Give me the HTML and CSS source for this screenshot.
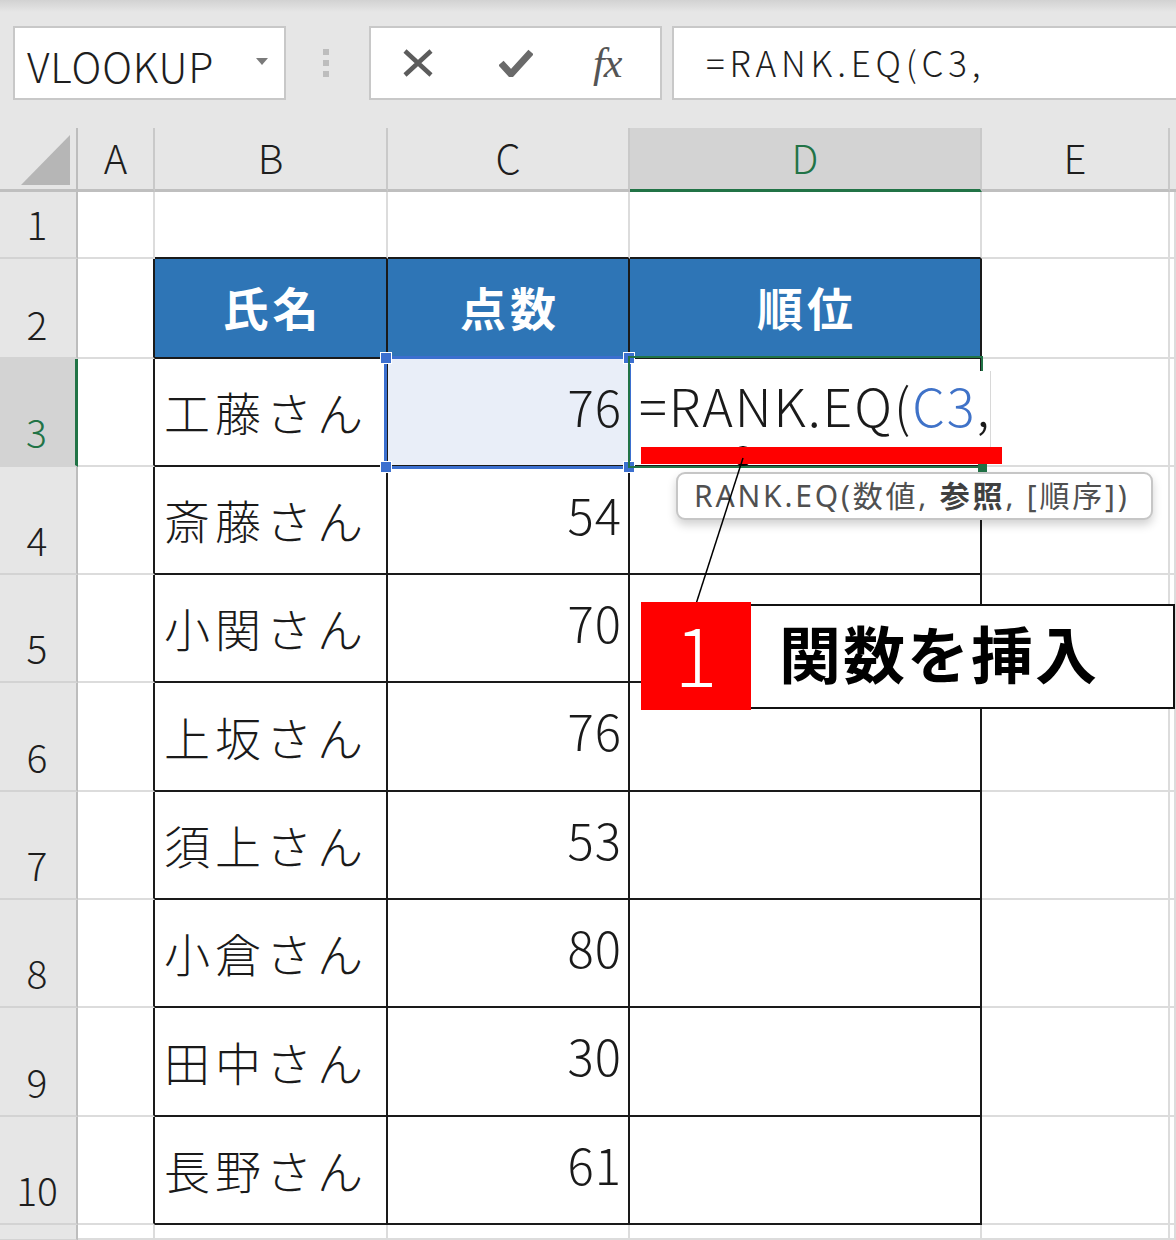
FILE: index.html
```html
<!DOCTYPE html>
<html lang="ja">
<head>
<meta charset="utf-8">
<title>RANK.EQ</title>
<link rel="stylesheet" href="styles.css">
</head>
<body>
<div class="toolbar">
  <div class="namebox"><span class="nb-text">VLOOKUP</span><span class="nb-arrow"></span></div>
  <div class="dots"><i></i><i></i><i></i></div>
  <div class="btnbox">
    <svg class="ic-x" width="30" height="28" viewBox="0 0 30 28"><path d="M2 2 L28 26 M28 2 L2 26" stroke="#5c5c5c" stroke-width="4.5" fill="none"/></svg>
    <svg class="ic-check" width="34" height="28" viewBox="0 0 34 28"><path d="M2 14 L12 25 L32 3" stroke="#6a6a6a" stroke-width="7" fill="none" stroke-linejoin="miter"/></svg>
    <span class="ic-fx">fx</span>
  </div>
  <div class="formula"><span class="f-text">=RANK.EQ(C3,</span></div>
</div>

<div class="sheet">
  <div class="ch corner"><svg width="76" height="62" viewBox="0 0 76 62"><polygon points="21,57 70,7 70,57" fill="#b6b6b6"/></svg></div>
  <div class="ch">A</div><div class="ch">B</div><div class="ch">C</div><div class="ch sel">D</div><div class="ch">E</div><div class="ch last"></div>

  <div class="rh">1</div><div class="c"></div><div class="c tb"></div><div class="c tb"></div><div class="c tb"></div><div class="c"></div><div class="c"></div>

  <div class="rh">2</div><div class="c tl"></div><div class="c t hd">氏名</div><div class="c t hd">点数</div><div class="c t hd">順位</div><div class="c"></div><div class="c"></div>

  <div class="rh sel">3</div><div class="c tl"></div><div class="c t nm">工藤さん</div><div class="c t num selc">76</div><div class="c t"></div><div class="c"></div><div class="c"></div>
  <div class="rh">4</div><div class="c tl"></div><div class="c t nm">斎藤さん</div><div class="c t num">54</div><div class="c t"></div><div class="c"></div><div class="c"></div>
  <div class="rh">5</div><div class="c tl"></div><div class="c t nm">小関さん</div><div class="c t num">70</div><div class="c t"></div><div class="c"></div><div class="c"></div>
  <div class="rh">6</div><div class="c tl"></div><div class="c t nm">上坂さん</div><div class="c t num">76</div><div class="c t"></div><div class="c"></div><div class="c"></div>
  <div class="rh">7</div><div class="c tl"></div><div class="c t nm">須上さん</div><div class="c t num">53</div><div class="c t"></div><div class="c"></div><div class="c"></div>
  <div class="rh">8</div><div class="c tl"></div><div class="c t nm">小倉さん</div><div class="c t num">80</div><div class="c t"></div><div class="c"></div><div class="c"></div>
  <div class="rh">9</div><div class="c tl"></div><div class="c t nm">田中さん</div><div class="c t num">30</div><div class="c t"></div><div class="c"></div><div class="c"></div>
  <div class="rh">10</div><div class="c tl"></div><div class="c t nm">長野さん</div><div class="c t num">61</div><div class="c t"></div><div class="c"></div><div class="c"></div>
  <div class="rh"></div><div class="c"></div><div class="c"></div><div class="c"></div><div class="c"></div><div class="c"></div><div class="c"></div>
</div>

<div class="selbox"><i class="h h1"></i><i class="h h2"></i><i class="h h3"></i><i class="h h4"></i></div>
<div class="active"><i class="fill"></i></div>
<div class="editor">=RANK.EQ(<span class="ref">C3</span>,</div>
<div class="tip">RANK.EQ(数値, <b>参照</b>, [順序])</div>
<svg class="anno" width="1176" height="1240" viewBox="0 0 1176 1240">
  <circle cx="743" cy="456" r="10" fill="#000"/>
  <rect x="641" y="447" width="361" height="17" fill="#ff0000"/>
  <line x1="743" y1="458" x2="696" y2="604" stroke="#000" stroke-width="1.5"/>
</svg>
<div class="callout"><div class="num-badge">1</div><div class="label">関数を挿入</div></div>
</body>
</html>
```

FILE: styles.css
```css
html, body {
  margin: 0;
  padding: 0;
}
body {
  width: 1176px;
  height: 1240px;
  overflow: hidden;
  position: relative;
  background: #e6e6e6;
  font-family: "Noto Sans CJK JP", "Noto Sans", sans-serif;
  font-weight: 300;
  color: #1e1e1e;
}

/* ---------- toolbar ---------- */
.toolbar {
  height: 128px;
  box-sizing: border-box;
  padding: 26px 0 28px 13px;
  display: flex;
  align-items: stretch;
  background: linear-gradient(#d2d2d2 0, #e6e6e6 12px);
}
.namebox {
  width: 273px;
  box-sizing: border-box;
  background: #fff;
  border: 2px solid #c8c8c8;
  display: flex;
  align-items: center;
  justify-content: space-between;
  padding: 4px 16px 0 12px;
}
.nb-text {
  font-size: 41px;
  letter-spacing: 0.8px;
  line-height: 1;
  color: #1e1e1e;
}
.nb-arrow {
  width: 0;
  height: 0;
  border-left: 6px solid transparent;
  border-right: 6px solid transparent;
  border-top: 7px solid #7a7a7a;
  margin-top: -8px;
}
.dots {
  margin-left: 37px;
  width: 6px;
  display: flex;
  flex-direction: column;
  justify-content: center;
  gap: 5px;
}
.dots i {
  display: block;
  width: 6px;
  height: 6px;
  background: #bdbdbd;
}
.btnbox {
  margin-left: 40px;
  width: 293px;
  box-sizing: border-box;
  background: #fff;
  border: 2px solid #c8c8c8;
  display: flex;
  align-items: center;
  padding-left: 32px;
}
.ic-check {
  margin-left: 66px;
}
.ic-fx {
  margin-left: 60px;
  font-family: "Liberation Serif", serif;
  font-style: italic;
  font-weight: 400;
  font-size: 42px;
  line-height: 1;
  color: #555;
  letter-spacing: -1px;
}
.formula {
  margin-left: 10px;
  flex: 1;
  background: #fff;
  border: 2px solid #c8c8c8;
  border-right: none;
  display: flex;
  align-items: center;
  padding: 0 0 4px 32px;
}
.f-text {
  font-size: 35px;
  line-height: 1;
  letter-spacing: 4.8px;
  color: #1e1e1e;
}

/* ---------- sheet grid ---------- */
.sheet {
  display: grid;
  grid-template-columns: 78px 77px 233px 242px 352px 188px 1fr;
  grid-template-rows: 64px 67px 100px 108px 108px 108px 109px 108px 108px 109px 108px 15px;
}
.sheet > div {
  box-sizing: border-box;
  min-width: 0;
  overflow: hidden;
}
.ch {
  background: #e6e6e6;
  border-right: 2px solid #c9c9c9;
  border-bottom: 3px solid #bfbfbf;
  display: flex;
  align-items: center;
  justify-content: center;
  font-size: 40px;
  line-height: 1;
  padding-bottom: 4px;
  color: #1e1e1e;
}
.ch.corner {
  border-right: 2px solid #bdbdbd;
  padding: 0;
  align-items: flex-start;
  justify-content: flex-start;
}
.ch.sel {
  background: #d3d3d3;
  color: #217346;
  border-bottom: 3px solid #217346;
}
.ch.last {
  border-right: none;
}
.rh {
  background: #e6e6e6;
  border-right: 2px solid #bdbdbd;
  border-bottom: 2px solid #d3d3d3;
  display: flex;
  align-items: flex-end;
  justify-content: center;
  font-size: 39px;
  line-height: 1;
  padding-bottom: 14px;
  padding-right: 2px;
  color: #1e1e1e;
}
.rh.sel {
  background: #d3d3d3;
  color: #217346;
  border-right: 3px solid #217346;
}
.c {
  background: #fff;
  border-right: 2px solid #dcdcdc;
  border-bottom: 2px solid #dcdcdc;
  display: flex;
  align-items: center;
}
.c.tb {
  border-bottom: 2px solid #1a1a1a;
}
.c.tl {
  border-right: 2px solid #1a1a1a;
}
.c.t {
  border-right: 2px solid #1a1a1a;
  border-bottom: 2px solid #1a1a1a;
}
.c.hd {
  background: #2e75b6;
  color: #fff;
  font-weight: 700;
  font-size: 46px;
  letter-spacing: 4px;
  line-height: 1;
  justify-content: center;
  padding-left: 4px;
  padding-bottom: 4px;
}
.c.nm {
  font-size: 46px;
  letter-spacing: 5px;
  line-height: 1;
  padding-left: 9px;
  padding-bottom: 2px;
  white-space: nowrap;
  color: #1a1a1a;
}
.c.num {
  justify-content: flex-end;
  font-size: 49px;
  letter-spacing: 1px;
  line-height: 1;
  padding-right: 6px;
  padding-bottom: 14px;
  color: #1a1a1a;
}
.c.selc {
  background: #e9eef8;
}

/* ---------- overlays ---------- */
.selbox {
  position: absolute;
  left: 384px;
  top: 356px;
  width: 247px;
  height: 113px;
  box-sizing: border-box;
  border: 3px solid #3b6fcf;
}
.selbox .h {
  position: absolute;
  width: 10px;
  height: 10px;
  background: #3b6fcf;
  outline: 1.5px solid #fff;
}
.h1 { left: -6px; top: -6px; }
.h2 { right: -6px; top: -6px; }
.h3 { left: -6px; bottom: -6px; }
.h4 { right: -6px; bottom: -6px; }

.active {
  position: absolute;
  left: 628px;
  top: 356px;
  width: 355px;
  height: 112px;
  box-sizing: border-box;
  border: 2px solid #217346;
}
.active .fill {
  position: absolute;
  right: -6px;
  bottom: -6px;
  width: 9px;
  height: 9px;
  background: #217346;
}
.editor {
  position: absolute;
  left: 632px;
  top: 371px;
  width: 359px;
  height: 89px;
  box-sizing: border-box;
  background: #fff;
  border-right: 1px solid #d8d8d8;
  padding: 8px 0 0 7px;
  font-size: 52px;
  letter-spacing: 1.9px;
  line-height: 1;
  white-space: nowrap;
  color: #1a1a1a;
}
.editor .ref {
  color: #3f72c8;
}
.tip {
  position: absolute;
  left: 676px;
  top: 472px;
  width: 477px;
  height: 48px;
  box-sizing: border-box;
  background: #fff;
  border: 2px solid #c6c6c6;
  border-radius: 9px;
  box-shadow: 0 5px 10px rgba(0, 0, 0, 0.18);
  padding: 4px 0 0 16px;
  font-family: "Noto Sans", "Noto Sans CJK JP", sans-serif;
  font-weight: 400;
  font-size: 30px;
  line-height: 36px;
  letter-spacing: 2.8px;
  white-space: nowrap;
  color: #505050;
}
.tip b {
  font-weight: 700;
  color: #404040;
}
.anno {
  position: absolute;
  left: 0;
  top: 0;
  pointer-events: none;
}
.callout {
  position: absolute;
  left: 641px;
  top: 602px;
  display: flex;
  align-items: center;
}
.num-badge {
  width: 110px;
  height: 108px;
  background: #ff0000;
  color: #fff;
  font-weight: 300;
  font-size: 80px;
  line-height: 1;
  display: flex;
  align-items: center;
  justify-content: center;
  padding-bottom: 8px;
  box-sizing: border-box;
}
.label {
  width: 424px;
  height: 105px;
  box-sizing: border-box;
  background: #fff;
  border: 2px solid #111;
  border-left: none;
  display: flex;
  align-items: center;
  padding: 0 0 8px 28px;
  font-weight: 700;
  font-size: 62px;
  letter-spacing: 2px;
  line-height: 1;
  color: #000;
}
```
